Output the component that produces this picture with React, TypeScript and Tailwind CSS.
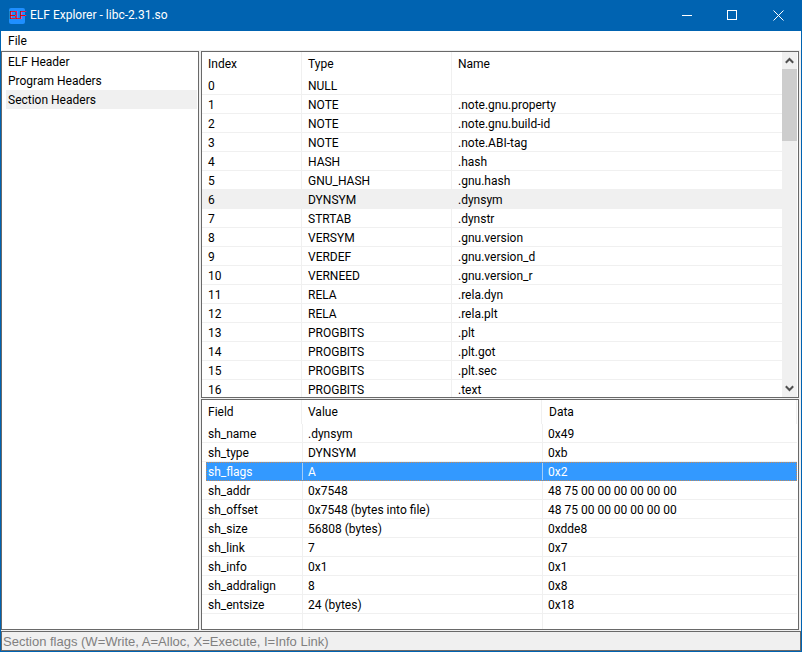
// App.tsx - ELF Explorer window
const sections = [
  ["0", "NULL", ""],
  ["1", "NOTE", ".note.gnu.property"],
  ["2", "NOTE", ".note.gnu.build-id"],
  ["3", "NOTE", ".note.ABI-tag"],
  ["4", "HASH", ".hash"],
  ["5", "GNU_HASH", ".gnu.hash"],
  ["6", "DYNSYM", ".dynsym"],
  ["7", "STRTAB", ".dynstr"],
  ["8", "VERSYM", ".gnu.version"],
  ["9", "VERDEF", ".gnu.version_d"],
  ["10", "VERNEED", ".gnu.version_r"],
  ["11", "RELA", ".rela.dyn"],
  ["12", "RELA", ".rela.plt"],
  ["13", "PROGBITS", ".plt"],
  ["14", "PROGBITS", ".plt.got"],
  ["15", "PROGBITS", ".plt.sec"],
  ["16", "PROGBITS", ".text"],
];

const fields = [
  ["sh_name", ".dynsym", "0x49"],
  ["sh_type", "DYNSYM", "0xb"],
  ["sh_flags", "A", "0x2"],
  ["sh_addr", "0x7548", "48 75 00 00 00 00 00 00"],
  ["sh_offset", "0x7548 (bytes into file)", "48 75 00 00 00 00 00 00"],
  ["sh_size", "56808 (bytes)", "0xdde8"],
  ["sh_link", "7", "0x7"],
  ["sh_info", "0x1", "0x1"],
  ["sh_addralign", "8", "0x8"],
  ["sh_entsize", "24 (bytes)", "0x18"],
  ["", "", ""],
];

function Chevron({ down }: { down?: boolean }) {
  return (
    <svg width="9" height="7" viewBox="0 0 9 7" className={down ? "rotate-180" : ""}>
      <path d="M0.8 5.8 L4.5 2 L8.2 5.8" fill="none" stroke="#505050" strokeWidth="2" />
    </svg>
  );
}

export default function App() {
  return (
    <div className="w-[802px] h-[652px] flex flex-col overflow-hidden bg-[#f0f0f0] border border-t-0 border-[#0063b1] font-['Roboto','Noto_Sans',sans-serif] text-[12px] leading-[19px] text-black">
      {/* Title bar */}
      <div className="h-[31px] -mx-px shrink-0 flex items-center bg-[#0063b1] text-white">
        <div className="ml-[9px] w-4 h-4 rounded-[2px] bg-[#1e8fff] flex items-center justify-center text-[#ff0000] font-['Liberation_Sans',sans-serif] text-[11px] tracking-[-1.5px] leading-none">
          ELF
        </div>
        <span className="ml-[5px]">ELF Explorer - libc-2.31.so</span>
        <div className="ml-auto flex">
          <div className="w-[46px] h-[30px] flex items-center justify-center">
            <svg width="10" height="10" viewBox="0 0 10 10">
              <path d="M0 5.5 H10" stroke="white" strokeWidth="1" />
            </svg>
          </div>
          <div className="w-[46px] h-[30px] pr-[2px] flex items-center justify-center">
            <svg width="10" height="10" viewBox="0 0 10 10">
              <rect x="0.5" y="0.5" width="9" height="9" fill="none" stroke="white" strokeWidth="1" />
            </svg>
          </div>
          <div className="w-[46px] h-[31px] pr-[1px] flex items-center justify-center">
            <svg width="11" height="11" viewBox="0 0 11 11">
              <path d="M0.5 0.5 L10.5 10.5 M10.5 0.5 L0.5 10.5" stroke="white" strokeWidth="1" />
            </svg>
          </div>
        </div>
      </div>

      {/* Menu */}
      <div className="h-[19px] shrink-0 bg-white px-[7px] pt-[1px]">File</div>

      {/* Panels */}
      <div className="flex-1 min-h-0 flex gap-[2px] pt-[1px] pr-[2px]">
        <div className="w-[198px] shrink-0 bg-white border border-[#696969] pl-[4px] pr-[1px]">
          <div className="h-[19px] pl-[2px] pt-[1px]">ELF Header</div>
          <div className="h-[19px] pl-[2px] pt-[1px]">Program Headers</div>
          <div className="h-[19px] pl-[2px] pt-[1px] bg-[#f0f0f0]">Section Headers</div>
        </div>

        <div className="flex-1 min-w-0 flex flex-col gap-[1px]">
          {/* Section table */}
          <div className="h-[347px] shrink-0 bg-white border border-[#696969] flex overflow-hidden">
            <div className="w-[580px] shrink-0 overflow-hidden">
              <div className="h-[24px] flex items-center">
                <div className="w-[100px] h-full pl-[6px] flex items-center border-r border-[#f0f0f0]">Index</div>
                <div className="w-[150px] h-full pl-[6px] flex items-center border-r border-[#f0f0f0]">Type</div>
                <div className="h-full pl-[6px] flex items-center">Name</div>
              </div>
              {sections.map((row) => (
                <div
                  key={row[0]}
                  className={`h-[19px] flex border-b border-[#f0f0f0] ${row[0] === "6" ? "bg-[#f0f0f0]" : ""}`}
                >
                  <div className="w-[100px] pl-[6px] pt-[1px] border-r border-[#f0f0f0]">{row[0]}</div>
                  <div className="w-[150px] pl-[6px] pt-[1px] border-r border-[#f0f0f0]">{row[1]}</div>
                  <div className="pl-[6px] pt-[1px]">{row[2]}</div>
                </div>
              ))}
            </div>
            <div className="w-[15px] shrink-0 bg-[#f0f0f0] flex flex-col">
              <div className="h-[17px] flex items-center justify-center">
                <Chevron />
              </div>
              <div className="h-[72px] bg-[#cdcdcd]" />
              <div className="flex-1" />
              <div className="h-[17px] flex items-center justify-center">
                <Chevron down />
              </div>
            </div>
          </div>

          {/* Field table */}
          <div className="flex-1 min-h-0 bg-white border border-[#696969] pr-[1px] overflow-hidden">
            <div className="h-[24px] flex items-center">
              <div className="w-[100px] h-full pl-[6px] flex items-center border-r border-[#f0f0f0]">Field</div>
              <div className="w-[240px] h-full pl-[6px] flex items-center border-r border-[#f0f0f0]">Value</div>
              <div className="flex-1 h-full pl-[7px] flex items-center border-r border-[#f0f0f0]">Data</div>
            </div>
            {fields.map((row, i) => (
              <div
                key={i}
                className={
                  row[0] === "sh_flags"
                    ? "h-[19px] flex bg-[#3399ff] text-white border border-dotted border-[#c08a5a] ml-[4px]"
                    : "h-[19px] flex border-b border-[#f0f0f0]"
                }
              >
                <div className={row[0] === "sh_flags" ? "w-[96px] pl-[1px] border-r border-[#f0f0f0]/60" : "w-[101px] pl-[6px] pt-[1px] border-r border-[#f0f0f0]"}>
                  {row[0]}
                </div>
                <div className={row[0] === "sh_flags" ? "w-[240px] pl-[5px] border-r border-[#f0f0f0]/60" : "w-[240px] pl-[5px] pt-[1px] border-r border-[#f0f0f0]"}>
                  {row[1]}
                </div>
                <div className={row[0] === "sh_flags" ? "pl-[5px]" : "pl-[5px] pt-[1px]"}>{row[2]}</div>
              </div>
            ))}
          </div>
        </div>
      </div>

      {/* Status bar */}
      <div className="h-[20px] mt-[1px] shrink-0 border border-[#696969] bg-[#f0f0f0] pl-[1px] flex items-center text-[#808080] font-['Liberation_Sans',sans-serif] text-[13px]">
        Section flags (W=Write, A=Alloc, X=Execute, I=Info Link)
      </div>
    </div>
  );
}
